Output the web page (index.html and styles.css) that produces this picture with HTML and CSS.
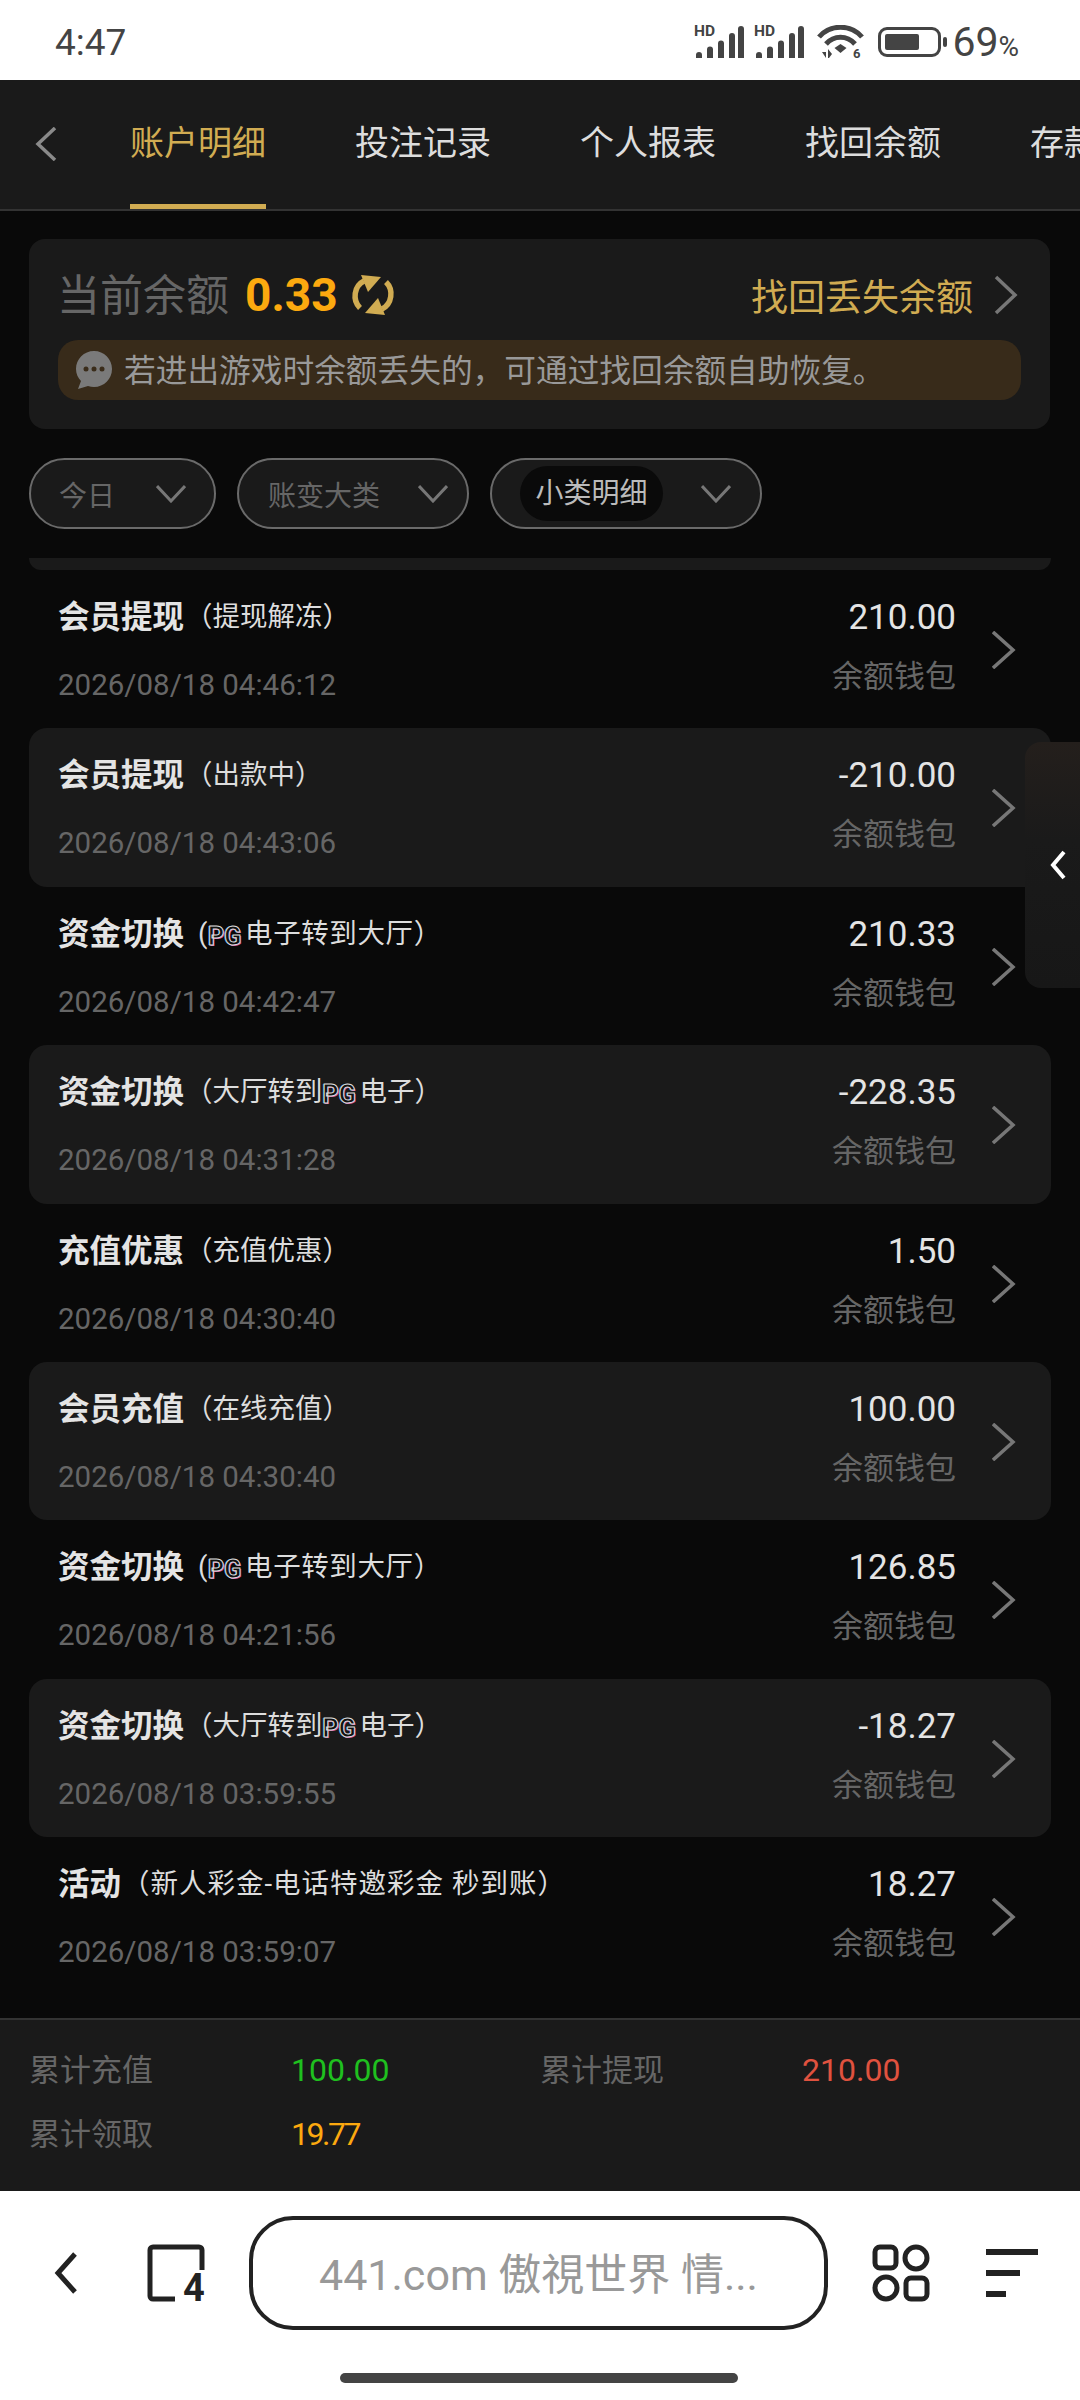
FILE: index.html
```html
<!DOCTYPE html>
<html lang="zh-CN">
<head>
  <meta charset="UTF-8">
  <title>账户明细</title>
  <meta name="viewport" content="width=device-width, initial-scale=1.0">
  <link rel="stylesheet" href="styles.css">
</head>
<body>
<div class="page">

  <div class="status-bar">
    <span class="clock">4:47</span>
    <div class="status-icons">
      <svg class="signal" viewBox="0 -6 50 38"><text x="0" y="10" class="hd">HD</text><path d="M2 32v-3a3 3 0 0 1 6 0v3zM13 32V23.500a3 3 0 0 1 6 0V32zM24 32V17.500a3 3 0 0 1 6 0V32zM35 32V10a3 3 0 0 1 6 0V32zM44 32V3a3 3 0 0 1 6 0V32z" fill="#444"/></svg>
      <svg class="signal" viewBox="0 -6 50 38"><text x="0" y="10" class="hd">HD</text><path d="M2 32v-3a3 3 0 0 1 6 0v3zM13 32V23.500a3 3 0 0 1 6 0V32zM24 32V17.500a3 3 0 0 1 6 0V32zM35 32V10a3 3 0 0 1 6 0V32zM44 32V3a3 3 0 0 1 6 0V32z" fill="#444"/></svg>
      <svg class="wifi" viewBox="0 0 47 40">
        <path d="M2 12C13 -1 34 -1 45 12M9 19C17 10 30 10 38 19" fill="none" stroke="#444" stroke-width="5"/>
        <path d="M23.500 19l6 4-6 5-6-5z" fill="#444"/>
        <path d="M5 27h4v6zM12 33h-1v-9l4 5z" fill="#444"/>
        <text x="36" y="33" class="wifi-six">6</text>
      </svg>
      <div class="battery"><div class="battery-level"></div></div>
      <div class="battery-nub"></div>
      <span class="percent">69<small>%</small></span>
    </div>
  </div>

  <nav class="tabs">
    <svg class="tabs-back" viewBox="0 0 22 34"><path d="M20 1L3 17l17 16" fill="none" stroke="#8a8a8a" stroke-width="3.500"/></svg>
    <a class="tab active">账户明细</a>
    <a class="tab">投注记录</a>
    <a class="tab">个人报表</a>
    <a class="tab">找回余额</a>
    <a class="tab">存款记录</a>
  </nav>

  <section class="balance-card">
    <div class="balance-row">
      <span class="balance-label">当前余额</span>
      <span class="balance-value">0.33</span>
      <svg class="refresh" viewBox="0 0 44 44">
        <path d="M9 35C1 27 3 13 13 8" fill="none" stroke="#d1ac52" stroke-width="5.500"/>
        <path d="M10 2l20 2-13 15z" fill="#d1ac52"/>
        <path d="M35 9c8 8 6 22-4 27" fill="none" stroke="#d1ac52" stroke-width="5.500"/>
        <path d="M34 42l-20-2 13-15z" fill="#d1ac52"/>
      </svg>
      <span class="recover-link">找回丢失余额</span>
      <svg class="recover-arrow" viewBox="0 0 24 40"><path d="M2 2l19 18L2 38" fill="none" stroke="#777" stroke-width="3.500"/></svg>
    </div>
    <div class="notice">
      <svg class="notice-icon" viewBox="0 0 38 40">
        <path d="M19 1C9 1 1 9 1 19c0 5 2 9 5 12l-3 8 10-3c2 .7 4 1 6 1 10 0 18-8 18-18S29 1 19 1z" fill="#7a7a7a"/>
        <circle cx="11" cy="19" r="2.500" fill="#3a2c1a"/><circle cx="19" cy="19" r="2.500" fill="#3a2c1a"/><circle cx="27" cy="19" r="2.500" fill="#3a2c1a"/>
      </svg>
      <span class="notice-text">若进出游戏时余额丢失的，可通过找回余额自助恢复。</span>
    </div>
  </section>

  <div class="filters">
    <div class="pill pill-day"><span>今日</span><svg class="pill-arrow" viewBox="0 0 30 18"><path d="M1 1l14 15L29 1" fill="none" stroke="#777" stroke-width="3"/></svg></div>
    <div class="pill pill-type"><span>账变大类</span><svg class="pill-arrow" viewBox="0 0 30 18"><path d="M1 1l14 15L29 1" fill="none" stroke="#777" stroke-width="3"/></svg></div>
    <div class="pill pill-sub"><span class="chip">小类明细</span><svg class="pill-arrow" viewBox="0 0 30 18"><path d="M1 1l14 15L29 1" fill="none" stroke="#777" stroke-width="3"/></svg></div>
  </div>

  <div class="list">
    <div class="peek"></div>

    <div class="row">
      <div class="row-left"><div class="row-title"><b>会员提现</b><span>（提现解冻）</span></div><div class="row-time">2026/08/18 04:46:12</div></div>
      <div class="row-right"><div class="row-amount">210.00</div><div class="row-wallet">余额钱包</div></div>
      <svg class="row-arrow" viewBox="0 0 24 38"><path d="M1 1l20 18L1 37" fill="none" stroke="#777" stroke-width="3.500"/></svg>
    </div>
    <div class="row shaded">
      <div class="row-left"><div class="row-title"><b>会员提现</b><span>（出款中）</span></div><div class="row-time">2026/08/18 04:43:06</div></div>
      <div class="row-right"><div class="row-amount">-210.00</div><div class="row-wallet">余额钱包</div></div>
      <svg class="row-arrow" viewBox="0 0 24 38"><path d="M1 1l20 18L1 37" fill="none" stroke="#777" stroke-width="3.500"/></svg>
    </div>
    <div class="row">
      <div class="row-left"><div class="row-title"><b>资金切换</b><span class="pg-first">(<i class="pg">PG</i>电子转到大厅）</span></div><div class="row-time">2026/08/18 04:42:47</div></div>
      <div class="row-right"><div class="row-amount">210.33</div><div class="row-wallet">余额钱包</div></div>
      <svg class="row-arrow" viewBox="0 0 24 38"><path d="M1 1l20 18L1 37" fill="none" stroke="#777" stroke-width="3.500"/></svg>
    </div>
    <div class="row shaded">
      <div class="row-left"><div class="row-title"><b>资金切换</b><span>（大厅转到<i class="pg">PG</i>电子）</span></div><div class="row-time">2026/08/18 04:31:28</div></div>
      <div class="row-right"><div class="row-amount">-228.35</div><div class="row-wallet">余额钱包</div></div>
      <svg class="row-arrow" viewBox="0 0 24 38"><path d="M1 1l20 18L1 37" fill="none" stroke="#777" stroke-width="3.500"/></svg>
    </div>
    <div class="row">
      <div class="row-left"><div class="row-title"><b>充值优惠</b><span>（充值优惠）</span></div><div class="row-time">2026/08/18 04:30:40</div></div>
      <div class="row-right"><div class="row-amount">1.50</div><div class="row-wallet">余额钱包</div></div>
      <svg class="row-arrow" viewBox="0 0 24 38"><path d="M1 1l20 18L1 37" fill="none" stroke="#777" stroke-width="3.500"/></svg>
    </div>
    <div class="row shaded">
      <div class="row-left"><div class="row-title"><b>会员充值</b><span>（在线充值）</span></div><div class="row-time">2026/08/18 04:30:40</div></div>
      <div class="row-right"><div class="row-amount">100.00</div><div class="row-wallet">余额钱包</div></div>
      <svg class="row-arrow" viewBox="0 0 24 38"><path d="M1 1l20 18L1 37" fill="none" stroke="#777" stroke-width="3.500"/></svg>
    </div>
    <div class="row">
      <div class="row-left"><div class="row-title"><b>资金切换</b><span class="pg-first">(<i class="pg">PG</i>电子转到大厅）</span></div><div class="row-time">2026/08/18 04:21:56</div></div>
      <div class="row-right"><div class="row-amount">126.85</div><div class="row-wallet">余额钱包</div></div>
      <svg class="row-arrow" viewBox="0 0 24 38"><path d="M1 1l20 18L1 37" fill="none" stroke="#777" stroke-width="3.500"/></svg>
    </div>
    <div class="row shaded">
      <div class="row-left"><div class="row-title"><b>资金切换</b><span>（大厅转到<i class="pg">PG</i>电子）</span></div><div class="row-time">2026/08/18 03:59:55</div></div>
      <div class="row-right"><div class="row-amount">-18.27</div><div class="row-wallet">余额钱包</div></div>
      <svg class="row-arrow" viewBox="0 0 24 38"><path d="M1 1l20 18L1 37" fill="none" stroke="#777" stroke-width="3.500"/></svg>
    </div>
    <div class="row">
      <div class="row-left"><div class="row-title"><b>活动</b><span class="wide">（新人彩金-电话特邀彩金 秒到账）</span></div><div class="row-time">2026/08/18 03:59:07</div></div>
      <div class="row-right"><div class="row-amount">18.27</div><div class="row-wallet">余额钱包</div></div>
      <svg class="row-arrow" viewBox="0 0 24 38"><path d="M1 1l20 18L1 37" fill="none" stroke="#777" stroke-width="3.500"/></svg>
    </div>
  </div>

  <footer class="totals">
    <span class="total-label">累计充值</span><span class="total-value green">100.00</span>
    <span class="total-label">累计提现</span><span class="total-value red">210.00</span>
    <span class="total-label">累计领取</span><span class="total-value orange">19.77</span>
  </footer>

  <div class="browser-bar">
    <svg class="bar-back" viewBox="0 0 24 42"><path d="M21 2L4 21l17 19" fill="none" stroke="#222" stroke-width="5"/></svg>
    <svg class="bar-tabs" viewBox="0 0 58 68">
      <path d="M28 55H6a3 3 0 0 1-3-3V6a3 3 0 0 1 3-3h46a3 3 0 0 1 3 3v20" fill="none" stroke="#222" stroke-width="5"/>
      <text x="36" y="57" class="tab-count">4</text>
    </svg>
    <div class="url-box">441.com 傲視世界 情...</div>
    <svg class="bar-grid" viewBox="0 0 58 58">
      <rect x="3" y="3" width="21" height="21" rx="5" fill="none" stroke="#222" stroke-width="5"/>
      <circle cx="44" cy="14" r="11" fill="none" stroke="#222" stroke-width="5"/>
      <circle cx="14" cy="44" r="11" fill="none" stroke="#222" stroke-width="5"/>
      <rect x="34" y="34" width="21" height="21" rx="5" fill="none" stroke="#222" stroke-width="5"/>
    </svg>
    <div class="bar-menu"><div class="menu-line long"></div><div class="menu-line mid"></div><div class="menu-line short"></div></div>
  </div>
  <div class="home-indicator"></div>

  <div class="side-tab">
    <svg class="side-arrow" viewBox="0 0 16 30"><path d="M14 2L3 15l11 13" fill="none" stroke="#fff" stroke-width="4"/></svg>
  </div>
</div>
</body>
</html>
```

FILE: styles.css
```css
* {
  box-sizing: border-box;
}

body {
  margin: 0;
  background: #090909;
  font-family: Roboto, "Noto Sans CJK SC", sans-serif;
}

.page {
  position: relative;
  width: 1080px;
  height: 2400px;
  overflow: hidden;
  background: #090909;
}

/* status bar */
.status-bar {
  height: 80px;
  background: #fff;
  color: #444;
  display: flex;
  justify-content: space-between;
  align-items: center;
  padding: 4px 61px 0 55px;
}

.clock {
  font-size: 37px;
}

.status-icons {
  display: flex;
  align-items: center;
}

.signal {
  width: 50px;
  height: 38px;
  margin: -6px 10px 0 0;
}

.hd {
  font: bold 15.500px Roboto, sans-serif;
  fill: #444;
}

.wifi {
  width: 47px;
  height: 40px;
  margin: 6px 14px 0 3px;
}

.wifi-six {
  font: bold 13px Roboto, sans-serif;
  fill: #444;
}

.battery {
  width: 63px;
  height: 30px;
  border: 3px solid #444;
  border-radius: 9px;
  padding: 4px;
}

.battery-level {
  width: 34px;
  height: 100%;
  background: #444;
  border-radius: 2px;
}

.battery-nub {
  width: 4px;
  height: 10px;
  margin: 0 5px 0 2px;
  background: #444;
  border-radius: 2px;
}

.percent {
  font-size: 41px;
  font-weight: 400;
}

.percent small {
  font-size: 28px;
}

/* tabs */
.tabs {
  height: 131px;
  background: #1a1a1a;
  border-bottom: 2px solid #333;
  display: flex;
  align-items: stretch;
  overflow: hidden;
  white-space: nowrap;
}

.tabs-back {
  width: 22px;
  height: 34px;
  margin: 47px 73px 0 35px;
  flex: none;
}

.tab {
  flex: none;
  width: 136px;
  margin-right: 89px;
  font-size: 34px;
  line-height: 127px;
  color: #ddd;
  border-bottom: 5px solid transparent;
  height: 129px;
}

.tab.active {
  color: #d1ac52;
  border-bottom-color: #d1ac52;
}

/* balance card */
.balance-card {
  margin: 28px 30px 0 29px;
  height: 190px;
  padding: 29px 29px;
  background: #1a1a1a;
  border-radius: 16px;
}

.balance-row {
  height: 54px;
  display: flex;
  align-items: center;
}

.balance-label {
  font-size: 43px;
  color: #666;
  margin-top: -6px;
  margin-left: -1px;
}

.balance-value {
  margin-left: 16px;
  font-size: 46px;
  font-weight: 700;
  color: #fca90f;
}

.refresh {
  width: 44px;
  height: 44px;
  margin-left: 13px;
}

.recover-link {
  margin-left: auto;
  font-size: 37px;
  color: #d1ac52;
}

.recover-arrow {
  width: 24px;
  height: 40px;
  margin: 0 3px 0 21px;
}

.notice {
  margin-top: 18px;
  height: 60px;
  padding-left: 17px;
  background: #382b1a;
  border-radius: 20px;
  display: flex;
  align-items: center;
  font-size: 31.700px;
  color: #999;
  white-space: nowrap;
}

.notice-text {
  margin-top: -5px;
}

.notice-icon {
  width: 38px;
  height: 40px;
  margin-right: 11px;
}

/* filters */
.filters {
  display: flex;
  gap: 21px;
  margin: 29px 0 0 29px;
}

.pill {
  height: 71px;
  display: flex;
  align-items: center;
  justify-content: space-between;
  border: 2px solid #6a6a6a;
  border-radius: 36px;
  background: #1a1a1a;
  font-size: 28px;
  color: #666;
}

.pill-day {
  width: 187px;
  padding: 0 28px;
}

.pill-type {
  width: 232px;
  padding: 0 19px 0 29px;
}

.pill-sub {
  width: 272px;
  padding: 0 29px 0 28px;
}

.pill-arrow {
  width: 30px;
  height: 18px;
}

.chip {
  width: 143px;
  height: 55px;
  line-height: 55px;
  text-align: center;
  background: #0a0a0a;
  border-radius: 28px;
  color: #bbb;
}

/* list */
.list {
  margin-top: 29px;
  height: 1460px;
}

.peek {
  height: 12px;
  margin: 0 29px;
  background: #1a1a1a;
  border-radius: 0 0 18px 18px;
}

.row {
  height: 158.400px;
  margin: 0 29px;
  padding: 0 35px 0 29px;
  display: flex;
  border-radius: 18px;
}

.row.shaded {
  background: #1a1a1a;
}

.row-left {
  flex: 1;
}

.row-title {
  margin-top: 22px;
  height: 44px;
  display: flex;
  align-items: center;
  color: #ddd;
  white-space: nowrap;
}

.row-title b {
  font-size: 31.500px;
  font-weight: 700;
  color: #e4e4e4;
}

.row-title span {
  font-size: 27.500px;
  margin-left: 1px;
}

.row-title .wide {
  letter-spacing: 1px;
}

.row-title .pg-first {
  margin-left: 14px;
  letter-spacing: .6px;
}

.pg {
  display: inline-block;
  width: 37px;
  font: bold 25px/28px Roboto, sans-serif;
  letter-spacing: 0;
  color: #111;
  -webkit-text-stroke: 1px #ddd;
  text-shadow: 1px 1px 0 #d45aa8, -1px 0 0 #4a9fe0;
  vertical-align: -2px;
}

.row-time {
  margin-top: 27px;
  font-size: 29.500px;
  line-height: 44px;
  color: #666;
}

.row-right {
  text-align: right;
}

.row-amount {
  margin-top: 26px;
  font-size: 35px;
  line-height: 44px;
  color: #e4e4e4;
}

.row-wallet {
  margin-top: 15px;
  font-size: 31px;
  line-height: 44px;
  color: #666;
}

.row-arrow {
  width: 24px;
  height: 38px;
  margin: 61px 0 0 36px;
}

/* totals */
.totals {
  height: 173px;
  padding: 18px 0 0 29px;
  background: #1a1a1a;
  border-top: 2px solid #333;
  display: grid;
  grid-template-columns: 262px 249px 262px 1fr;
  grid-auto-rows: 64px;
  align-items: center;
}

.total-label {
  font-size: 31px;
  color: #666;
  padding-bottom: 6px;
}

.total-value {
  font-size: 32px;
  font-weight: 400;
}

.total-value.green {
  color: #1fc01f;
}

.total-value.red {
  color: #e0523f;
}

.total-value.orange {
  color: #fca90f;
  letter-spacing: -2.500px;
}

/* browser bar */
.browser-bar {
  height: 139px;
  padding-top: 25px;
  background: #fff;
  display: flex;
  align-items: center;
}

.bar-back {
  width: 24px;
  height: 42px;
  margin: 0 69px 0 54px;
}

.bar-tabs {
  width: 58px;
  height: 68px;
  margin: 10px 44px 0 0;
}

.tab-count {
  font: bold 38px Roboto, sans-serif;
  fill: #222;
}

.url-box {
  width: 579px;
  height: 114px;
  border: 4px solid #222;
  border-radius: 44px;
  background: #fff;
  display: flex;
  align-items: center;
  justify-content: center;
  padding-bottom: 4px;
  font-size: 43px;
  color: #999;
  white-space: nowrap;
}

.bar-grid {
  width: 58px;
  height: 58px;
  margin: 0 56px 0 44px;
}

.bar-menu {
  width: 52px;
  display: flex;
  flex-direction: column;
  gap: 15px;
}

.menu-line {
  height: 6px;
  background: #222;
}

.menu-line.long {
  width: 52px;
}

.menu-line.mid {
  width: 34px;
}

.menu-line.short {
  width: 20px;
}

.home-indicator {
  height: 70px;
  background: #fff;
  position: relative;
}

.home-indicator::after {
  content: "";
  position: absolute;
  left: 340px;
  top: 43px;
  width: 398px;
  height: 10px;
  border-radius: 5px;
  background: #444;
}

/* floating side tab over the list */
.side-tab {
  position: absolute;
  right: 0;
  top: 742px;
  width: 55px;
  height: 246px;
  border-radius: 16px 0 0 16px;
  background: linear-gradient(to bottom, #241f1c, #1a1a1a 40%, #171717);
  display: flex;
  align-items: center;
  justify-content: center;
}

.side-arrow {
  width: 16px;
  height: 30px;
  margin-left: 10px;
}
```
